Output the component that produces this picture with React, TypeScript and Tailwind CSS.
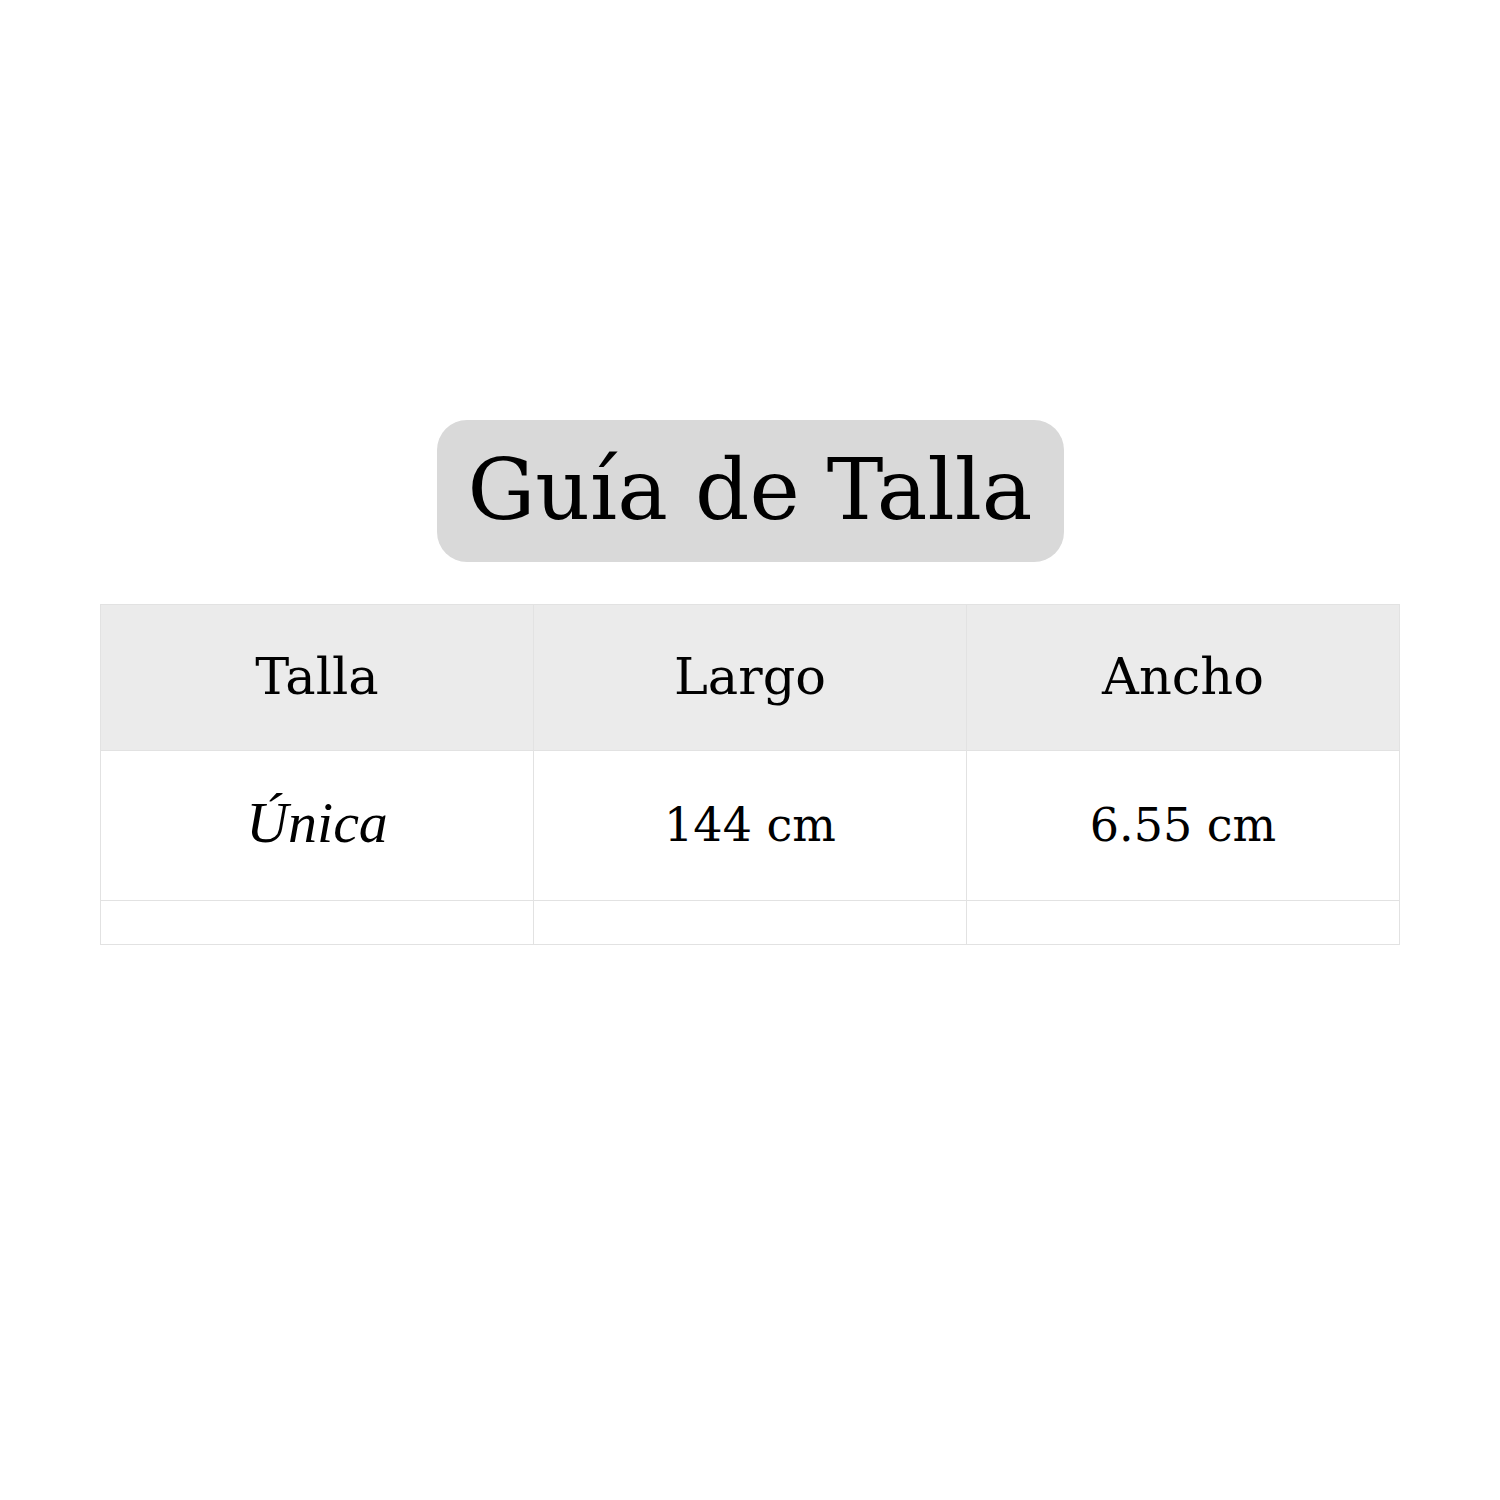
import React from "react";

export default function App() {
  const cell = "border-r border-b border-[#e2e2e2] flex items-center justify-center";
  const serif = "font-['DejaVu_Serif','Liberation_Serif',serif]";
  return (
    <div className="w-[1500px] h-[1500px] bg-white flex flex-col items-center pt-[420px]">
      <div
        className={`${serif} w-[627px] h-[142px] rounded-[30px] bg-[#d9d9d9] flex items-center justify-center text-[85px] text-black tracking-[0px] leading-none pb-[4px]`}
      >
        Guía de Talla
      </div>
      <div className="mt-[42px] w-[1300px] border-l border-t border-[#e2e2e2] grid grid-cols-3 text-black">
        <div className={`${cell} ${serif} h-[146px] bg-[#ebebeb] text-[51px]`}>Talla</div>
        <div className={`${cell} ${serif} h-[146px] bg-[#ebebeb] text-[51px]`}>Largo</div>
        <div className={`${cell} ${serif} h-[146px] bg-[#ebebeb] text-[51px]`}>Ancho</div>
        <div className={`${cell} font-['Liberation_Serif',serif] h-[150px] text-[58px] italic pb-[6px]`}>
          Única
        </div>
        <div className={`${cell} ${serif} h-[150px] text-[46px]`}>144 cm</div>
        <div className={`${cell} ${serif} h-[150px] text-[46px]`}>6.55 cm</div>
        <div className={`${cell} h-[44px]`}></div>
        <div className={`${cell} h-[44px]`}></div>
        <div className={`${cell} h-[44px]`}></div>
      </div>
    </div>
  );
}
